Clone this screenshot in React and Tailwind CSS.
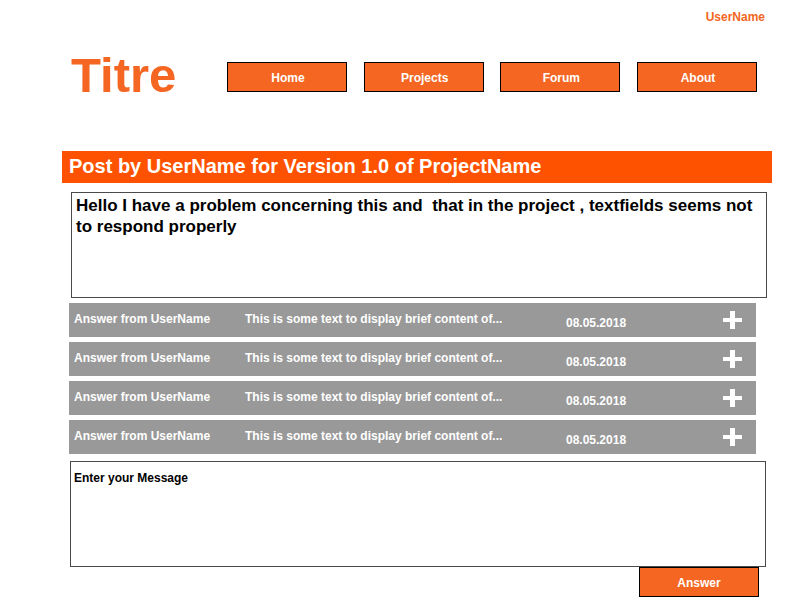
const links = ["Home", "Projects", "Forum", "About"];

const answers = [1, 2, 3, 4].map((id) => ({
  id,
  author: "Answer from UserName",
  excerpt: "This is some text to display brief content of...",
  date: "08.05.2018",
}));

function PlusIcon() {
  return (
    <svg width="19" height="18" viewBox="0 0 19 18" fill="currentColor" aria-hidden="true">
      <path d="M7 0h5v7h7v4h-7v7H7v-7H0V7h7z" />
    </svg>
  );
}

function AnswerRow({ answer }) {
  return (
    <li className="grid h-[34px] grid-cols-[171fr_321fr_157fr_auto] items-start bg-[#999999] pt-2 pr-3.5 pl-[5px] text-white">
      <span>{answer.author}</span>
      <span>{answer.excerpt}</span>
      <time className="pt-1">{answer.date}</time>
      <button type="button" aria-label="Show answer" className="block">
        <PlusIcon />
      </button>
    </li>
  );
}

export default function App() {
  return (
    <div className="bg-white font-['Liberation_Sans',Arial,sans-serif] text-xs font-bold text-black">
      <div className="flex justify-end pt-[9px] pr-[35px]">
        <a href="#user" className="text-[#f46622]">UserName</a>
      </div>

      <header className="mt-[22px] mr-[43px] ml-[71px] flex items-center">
        <h1 className="w-[156px] shrink-0 pb-1 text-[49px] leading-[56px] text-[#f46622]">Titre</h1>
        <nav className="flex flex-1 justify-between">
          {links.map((link) => (
            <a
              key={link}
              href={`#${link.toLowerCase()}`}
              className="flex h-[30px] w-[120px] items-center justify-center border border-black bg-[#f46622] pt-0.5 pl-0.5 text-white"
            >
              {link}
            </a>
          ))}
        </nav>
      </header>

      <main className="mt-11 mr-7 ml-[62px]">
        <h2 className="h-8 bg-[#ff5200] pl-[7px] text-xl leading-[30px] text-white">
          Post by UserName for Version 1.0 of ProjectName
        </h2>

        <p className="mt-[9px] mr-[5px] ml-[9px] min-h-[106px] border border-[#4a4a4a] px-1 pt-0.5 text-[17px] leading-[21px] whitespace-pre-wrap">
          {"Hello I have a problem concerning this and  that in the project , textfields seems not to respond properly"}
        </p>

        <ul className="mt-[5px] mr-4 ml-[7px] flex flex-col gap-[5px]">
          {answers.map((answer) => (
            <AnswerRow key={answer.id} answer={answer} />
          ))}
        </ul>

        <form className="mt-[7px] mr-1.5 ml-2">
          <textarea
            aria-label="Enter your Message"
            placeholder="Enter your Message"
            className="block h-[106px] w-full resize-none border border-[#4a4a4a] px-[3px] pt-2 placeholder:text-black"
          />
          <div className="flex justify-end pr-[7px]">
            <button type="button" className="h-[30px] w-[120px] border border-black bg-[#f46622] pt-0.5 text-white">
              Answer
            </button>
          </div>
        </form>
      </main>
    </div>
  );
}
